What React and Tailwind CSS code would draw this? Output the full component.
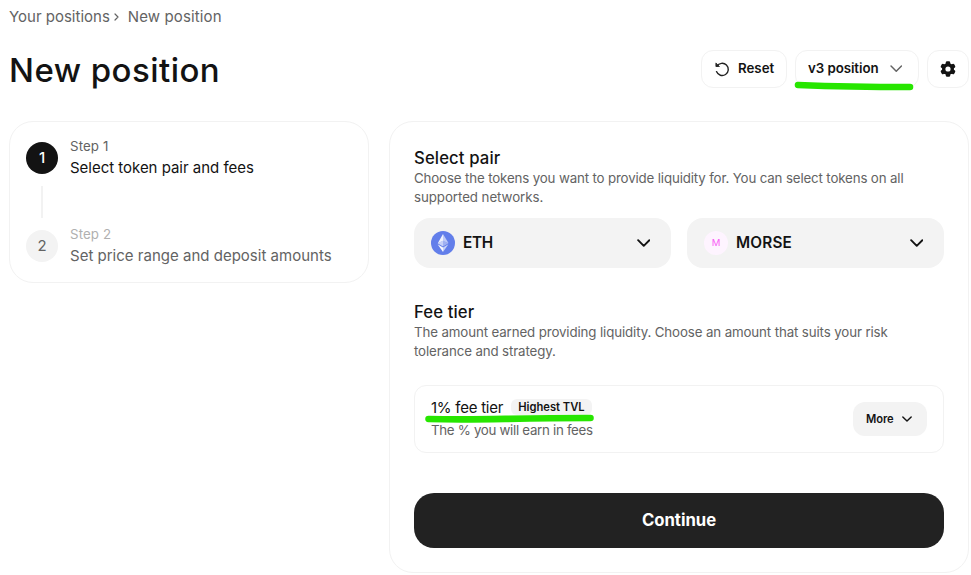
const INK = "text-[#131313]";
const SUB = "text-[#636363]";

function Chevron({ className, stroke, width = 1.7 }) {
  return (
    <svg viewBox="0 0 12 7" fill="none" className={className}>
      <path d="M1 1l5 5 5-5" stroke={stroke} strokeWidth={width} strokeLinecap="round" strokeLinejoin="round" />
    </svg>
  );
}

function ResetIcon() {
  return (
    <svg viewBox="0 0 14 14" fill="none" className="h-3.5 w-3.5 overflow-visible" stroke="#222222" strokeWidth="1.4" strokeLinecap="round" strokeLinejoin="round">
      <path d="M2 4.200A6.100 6.100 0 1 1 1.500 9.600" />
      <path d="M0.900 1.300v3.200h3.200z" fill="#222222" strokeWidth="0.800" />
    </svg>
  );
}

function GearIcon() {
  return (
    <svg viewBox="-8 -8 16 16" className="h-4 w-4">
      <g fill="#131313">
        <circle r="6" />
        {[0, 60, 120].map((a) => (
          <rect key={a} x="-2.200" y="-7.700" width="4.400" height="15.400" rx="1.300" transform={`rotate(${a})`} />
        ))}
      </g>
      <circle r="2.600" fill="#ffffff" />
    </svg>
  );
}

function EthIcon() {
  return (
    <svg viewBox="0 0 24 24" className="h-6 w-6">
      <circle cx="12" cy="12" r="12" fill="#627EEA" />
      <path d="M12 3v6.65l5.6 2.5z" fill="#fff" fillOpacity=".6" />
      <path d="M12 3L6.8 12.15 12 9.65z" fill="#fff" fillOpacity=".9" />
      <path d="M12 16.5V21l5.4-7.8z" fill="#fff" fillOpacity=".65" />
      <path d="M12 21v-4.5l-5.4-3.3z" fill="#fff" fillOpacity=".95" />
      <path d="M12 15.4l5.4-3.25L12 9.65z" fill="#fff" fillOpacity=".4" />
      <path d="M6.6 12.15L12 15.4V9.65z" fill="#fff" fillOpacity=".65" />
    </svg>
  );
}

function Steps() {
  return (
    <ol className="h-[162px] w-[360px] rounded-[24px] border border-[#f2f2f2] px-4 pt-4">
      <li className="flex h-[88px] gap-3">
        <div className="flex flex-col items-center gap-3 pt-1">
          <span className="flex h-8 w-8 items-center justify-center rounded-full bg-[#131313] text-[15px] font-medium text-white">1</span>
          <span className="h-8 w-0.5 bg-[#f2f2f2]" />
        </div>
        <div>
          <p className={`text-[13.3px] leading-4 tracking-[0.1px] ${SUB}`}>Step 1</p>
          <p className={`mt-0.5 text-[15px] leading-6 tracking-[-0.02px] ${INK}`}>Select token pair and fees</p>
        </div>
      </li>
      <li className="flex gap-3">
        <div className="pt-1">
          <span className="flex h-8 w-8 items-center justify-center rounded-full bg-[#f3f3f3] text-[15px] text-[#636363]">2</span>
        </div>
        <div>
          <p className="text-[13.3px] leading-4 tracking-[0.1px] text-[#b0b0b0]">Step 2</p>
          <p className={`mt-0.5 text-[15px] leading-6 tracking-[0.01px] ${SUB}`}>Set price range and deposit amounts</p>
        </div>
      </li>
    </ol>
  );
}

function TokenSelect({ icon, children }) {
  return (
    <button className="flex h-[50px] flex-1 items-center gap-2 rounded-2xl bg-[#f3f3f3] pr-[21px] pl-[17px]">
      {icon}
      {children}
      <Chevron stroke="#131313" className="ml-auto h-[8px] w-[13.5px]" />
    </button>
  );
}

export default function App() {
  return (
    <div className="h-[575px] w-[971px] overflow-hidden bg-white pl-[9px] font-['Inter',sans-serif]">
      <nav className={`flex h-[34px] items-center text-[15px] ${SUB}`}>
        <span>Your positions</span>
        <svg viewBox="0 0 5 8" fill="none" className="mr-[9px] ml-[4px] h-[8px] w-[5px]">
          <path d="M1 1l3 3-3 3" stroke="#636363" strokeWidth="1.2" strokeLinecap="round" strokeLinejoin="round" />
        </svg>
        <span className="tracking-[0.12px]">New position</span>
      </nav>

      <header className="mt-4 flex h-[38px] w-[960px] items-center justify-between">
        <h1 className={`pt-px text-[33px] leading-[38px] font-[460] tracking-[0.45px] ${INK}`}>New position</h1>
        <div className={`flex gap-2 text-[13.3px] font-medium ${INK}`}>
          <button className="flex h-[38px] w-[86px] items-center gap-[9px] rounded-xl border border-[#f2f2f2] pl-[13px]">
            <ResetIcon />
            <span className="font-[560]">Reset</span>
          </button>
          <div className="relative">
            <button className="flex h-[38px] w-[124px] items-center justify-between rounded-xl border border-[#f2f2f2] pr-[16px] pl-3">
              <span className="font-[560] tracking-[-0.06px]">v3 position</span>
              <Chevron stroke="#636363" width={1.4} className="h-[7.3px] w-[12.5px]" />
            </button>
            <svg viewBox="0 0 120 12" fill="none" className="absolute top-[29px] left-[-1px] h-3 w-[120px]">
              <path d="M4 6C30 7 60 8 116 8" stroke="#27e600" strokeWidth="6.600" strokeLinecap="round" />
            </svg>
          </div>
          <button className="flex h-[38px] w-[42px] items-center justify-center rounded-xl border border-[#f2f2f2]">
            <GearIcon />
          </button>
        </div>
      </header>

      <main className="mt-[33px] flex items-start gap-5">
        <Steps />
        <section className="h-[452px] w-[580px] rounded-[24px] border border-[#f2f2f2] p-6">
          <h2 className={`text-[16.7px] leading-6 font-[450] tracking-[0.12px] ${INK}`}>Select pair</h2>
          <p className={`-mt-px text-[13.3px] leading-[18.5px] tracking-[-0.145px] ${SUB}`}>
            Choose the tokens you want to provide liquidity for. You can select tokens on all
            <br />
            <span className="tracking-[-0.06px]">supported networks.</span>
          </p>
          <div className={`mt-3 flex gap-4 text-[15.3px] font-[560] ${INK}`}>
            <TokenSelect icon={<EthIcon />}>
              <span className="tracking-[-0.25px]">ETH</span>
            </TokenSelect>
            <TokenSelect
              icon={<span className="flex h-6 w-6 items-center justify-center rounded-full bg-[#fef4ff] text-[9.5px] font-normal text-[#f95cf5]">M</span>}
            >
              <span className="tracking-[0.2px]">MORSE</span>
            </TokenSelect>
          </div>

          <h2 className={`mt-8 text-[16.7px] leading-6 font-[450] tracking-[0.1px] ${INK}`}>Fee tier</h2>
          <p className={`-mt-px text-[13.3px] leading-[19px] tracking-[-0.12px] ${SUB}`}>
            The amount earned providing liquidity. Choose an amount that suits your risk
            <br />
            tolerance and strategy.
          </p>
          <div className="mt-6 flex h-[68px] items-center justify-between rounded-xl border border-[#f2f2f2] px-4">
            <div className="relative">
              <div className="flex h-[22px] items-center gap-2">
                <span className={`pt-0.5 text-[15px] tracking-[-0.24px] ${INK}`}>1% fee tier</span>
                <span className={`flex h-4 items-center rounded-md bg-[#f3f3f3] px-[7px] text-[11.2px] font-semibold ${INK}`}>Highest TVL</span>
              </div>
              <p className={`mt-px mb-px text-[13.3px] leading-[22px] tracking-[-0.3px] ${SUB}`}>The % you will earn in fees</p>
              <svg viewBox="0 0 172 12" fill="none" className="absolute top-[16px] left-[-7px] h-3 w-[172px]">
                <path d="M4.500 7C60 8.500 80 6 166.500 6" stroke="#27e600" strokeWidth="6.600" strokeLinecap="round" />
              </svg>
            </div>
            <button className={`flex h-[34px] w-[74px] items-center gap-2 rounded-xl bg-[#f3f3f3] pl-[13px] text-[11.2px] font-semibold tracking-[-0.08px] ${INK}`}>
              <span>More</span>
              <Chevron stroke="#131313" className="h-[6px] w-[10px]" />
            </button>
          </div>
          <button className="mt-10 h-[55px] w-full rounded-[20px] bg-[#222222] pt-px text-[16.7px] font-bold tracking-[-0.02px] text-white">Continue</button>
        </section>
      </main>
    </div>
  );
}
